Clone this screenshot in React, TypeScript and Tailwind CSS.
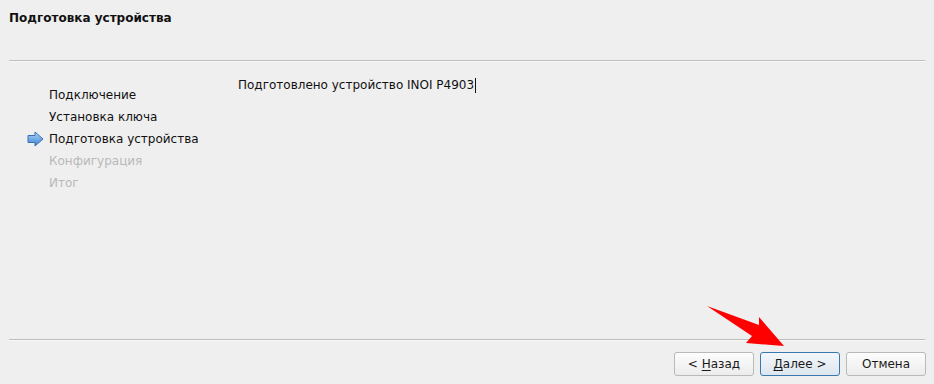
import React from "react";

const steps = [
  { label: "Подключение", state: "done" },
  { label: "Установка ключа", state: "done" },
  { label: "Подготовка устройства", state: "current" },
  { label: "Конфигурация", state: "todo" },
  { label: "Итог", state: "todo" },
];

function BlueArrow() {
  return (
    <svg width="17" height="16" viewBox="0 0 17 16">
      <defs>
        <linearGradient id="ba" x1="0" y1="0" x2="0" y2="1">
          <stop offset="0" stopColor="#b3d4f5" />
          <stop offset="0.5" stopColor="#74abe8" />
          <stop offset="1" stopColor="#3f7fcc" />
        </linearGradient>
      </defs>
      <path
        d="M1 4.5 H8 V1 L16 8 L8 15 V11.5 H1 Z"
        fill="url(#ba)"
        stroke="#3a6fb3"
        strokeWidth="1"
        strokeLinejoin="round"
      />
    </svg>
  );
}

function Btn({ children, primary }: { children: React.ReactNode; primary?: boolean }) {
  return (
    <button
      className={
        primary
          ? "w-[80px] h-[24px] rounded-[3px] border border-[#3b78ab] bg-gradient-to-b from-[#f3f7fb] to-[#dde6ef] text-[12px] text-[#1a1a1a] flex items-center justify-center"
          : "w-[80px] h-[24px] rounded-[3px] border border-[#b9b9b9] bg-gradient-to-b from-[#fdfdfd] to-[#ececec] text-[12px] text-[#1a1a1a] flex items-center justify-center"
      }
    >
      {children}
    </button>
  );
}

export default function App() {
  return (
    <div
      className="w-[934px] h-[384px] bg-[#efefef] flex flex-col text-[#111] overflow-hidden relative"
      style={{ fontFamily: '"DejaVu Sans", "Noto Sans", sans-serif' }}
    >
      <div className="h-[60px] px-[9px] pt-[10px]">
        <div className="text-[12px] leading-[16px] font-bold text-[#111]">Подготовка устройства</div>
      </div>
      <div className="mx-[9px] h-[1px] bg-[#bdbdbd]" />
      <div className="mx-[9px] h-[1px] bg-[#f8f8f8]" />
      <div className="h-[277px] flex">
        <div className="w-[238px] pl-[27px] pt-[22px] flex flex-col">
          {steps.map((s) => (
            <div key={s.label} className="h-[22px] flex items-center">
              <div className="w-[22px] flex items-center">
                {s.state === "current" ? <BlueArrow /> : null}
              </div>
              <span
                className={
                  s.state === "todo"
                    ? "text-[12px] text-[#b9b9b9]"
                    : "text-[12px] text-[#111]"
                }
              >
                {s.label}
              </span>
            </div>
          ))}
        </div>
        <div className="pt-[14px] flex items-start">
          <div className="text-[12px] leading-[18px] flex items-center">
            Подготовлено устройство INOI P4903
            <span className="inline-block w-[1px] h-[15px] bg-[#111] ml-[1px]" />
          </div>
        </div>
      </div>
      <div className="mx-[9px] h-[1px] bg-[#bdbdbd]" />
      <div className="mx-[9px] h-[1px] bg-[#f8f8f8]" />
      <div className="flex justify-end gap-[6px] pr-[8px] pt-[11px]">
        <Btn>
          &lt;&nbsp;<span className="underline underline-offset-2">Н</span>азад
        </Btn>
        <Btn primary>
          <span className="underline underline-offset-2">Д</span>алее &gt;
        </Btn>
        <Btn>Отмена</Btn>
      </div>
      <svg
        className="absolute left-0 top-0 pointer-events-none"
        width="934"
        height="384"
        viewBox="0 0 934 384"
      >
        <polygon
          points="707,306 759,325 759,317 784,346 746,343 752,336"
          fill="#ff0000"
        />
      </svg>
    </div>
  );
}
